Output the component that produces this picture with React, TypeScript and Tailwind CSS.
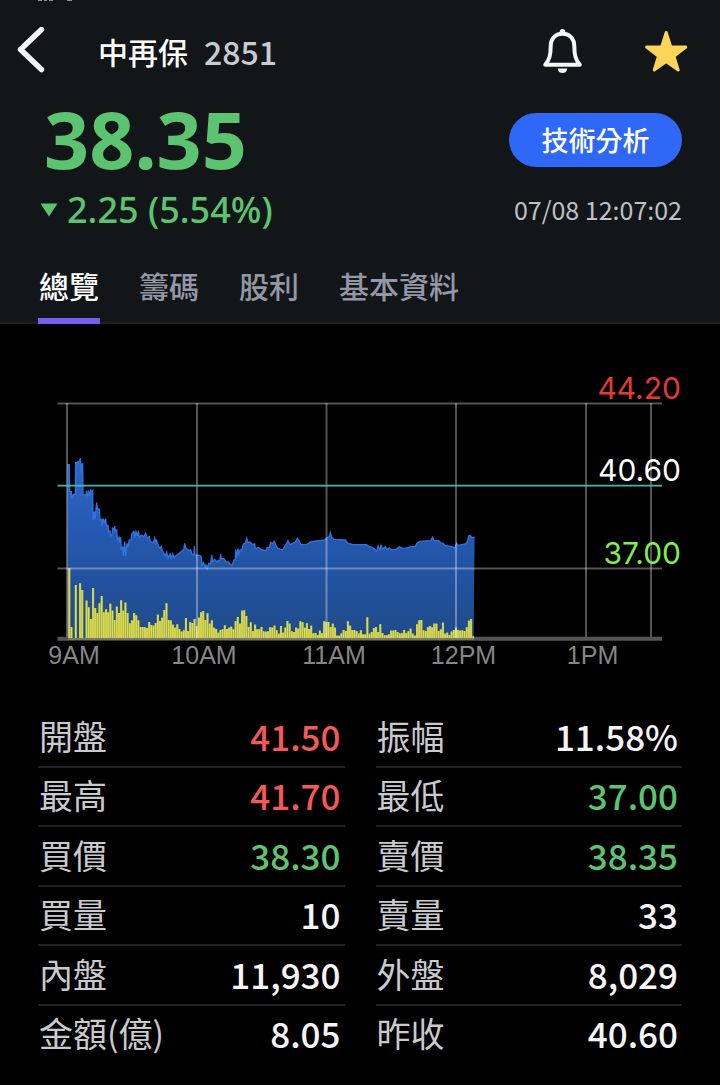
import React from "react";

const CJK = 'font-["Noto_Sans_CJK_TC","Noto_Sans",sans-serif]';

type Tone = "up" | "down" | "flat";
type Quote = { label: string; value: string; tone: Tone };

const quotes: Quote[] = [
  { label: "開盤", value: "41.50", tone: "up" },
  { label: "振幅", value: "11.58%", tone: "flat" },
  { label: "最高", value: "41.70", tone: "up" },
  { label: "最低", value: "37.00", tone: "down" },
  { label: "買價", value: "38.30", tone: "down" },
  { label: "賣價", value: "38.35", tone: "down" },
  { label: "買量", value: "10", tone: "flat" },
  { label: "賣量", value: "33", tone: "flat" },
  { label: "內盤", value: "11,930", tone: "flat" },
  { label: "外盤", value: "8,029", tone: "flat" },
  { label: "金額(億)", value: "8.05", tone: "flat" },
  { label: "昨收", value: "40.60", tone: "flat" },
];

const toneClass: Record<Tone, string> = {
  up: "text-[#f25a5a]",
  down: "text-[#5cc470]",
  flat: "text-[#f5f5f7]",
};

const tabs = ["總覽", "籌碼", "股利", "基本資料"];

// Volume per minute, in thirds of a chart unit.
const volume = [
  213, 36, 0, 162, 0, 167, 147, 0, 115, 95, 60, 153, 93, 78, 107, 129, 80, 89, 80, 106,
  85, 57, 97, 78, 116, 85, 109, 78, 47, 56, 78, 71, 56, 36, 36, 35, 33, 51, 42, 40,
  48, 73, 54, 64, 87, 107, 57, 56, 43, 34, 44, 30, 22, 26, 63, 24, 51, 48, 60, 39,
  64, 80, 84, 57, 77, 46, 56, 34, 30, 19, 27, 29, 41, 30, 34, 37, 29, 54, 66, 46,
  85, 86, 69, 36, 50, 24, 43, 29, 29, 36, 23, 22, 23, 35, 34, 40, 26, 16, 39, 19,
  34, 54, 46, 23, 21, 34, 31, 53, 50, 34, 47, 30, 40, 17, 18, 12, 25, 17, 53, 51,
  51, 36, 46, 34, 10, 10, 17, 27, 24, 53, 40, 27, 27, 24, 17, 26, 14, 14, 65, 16,
  21, 33, 36, 21, 44, 18, 11, 11, 14, 25, 25, 27, 21, 17, 17, 27, 18, 23, 31, 16,
  10, 44, 56, 57, 26, 24, 35, 39, 35, 46, 46, 24, 29, 49, 16, 19, 12, 22, 27, 34,
  27, 25, 26, 24, 35, 55, 60, 8,
];

// Price trace as x,y pairs, in thirds of a chart unit.
const trace =
  "22,44 28,44 29,125 34,125 35,145 40,133 46,133 47,38 52,38 55,34 59,34 61,25 62,40 64,68 65,42 68,42 69,135 78,135 80,122 82,140 86,125 90,138 92,118 94,126 98,122 99,210 103,185 105,208 110,158 112,175 118,178 120,210 125,208 126,228 130,206 134,220 137,206 139,228 144,226 146,245 150,243 152,258 156,255 158,235 162,240 164,228 166,243 170,240 172,268 177,262 178,278 182,262 184,300 188,290 190,318 194,275 197,318 201,280 204,292 208,270 213,270 216,250 222,244 225,262 228,245 233,258 235,242 238,262 244,255 252,260 257,250 262,264 268,260 270,275 280,278 284,264 288,278 290,272 296,290 300,294 304,290 306,300 312,310 316,318 320,306 324,325 330,312 334,326 338,312 342,322 350,315 358,310 366,303 372,296 374,280 378,296 388,302 392,300 396,312 402,315 403,288 405,315 420,316 424,322 426,345 430,338 436,352 438,345 442,356 446,340 452,342 455,315 458,335 464,328 470,335 480,330 482,312 484,326 492,326 498,336 505,336 510,342 517,345 522,330 526,328 527,298 530,322 534,296 536,315 540,300 546,298 550,282 556,280 560,264 564,278 570,276 578,284 584,282 586,295 596,293 606,300 618,302 622,293 628,292 632,278 638,280 643,274 647,284 652,294 662,298 668,300 674,290 680,280 684,272 690,284 698,280 706,276 712,266 718,272 722,284 740,284 752,276 770,273 794,270 800,264 808,260 811,248 815,262 822,268 856,270 864,280 880,284 920,284 928,290 936,292 944,298 950,304 954,288 960,300 963,286 968,298 976,290 980,298 988,294 996,300 1008,298 1018,290 1030,296 1046,292 1052,290 1066,290 1070,280 1080,274 1112,272 1118,262 1122,272 1136,272 1142,278 1150,280 1154,286 1176,290 1184,294 1190,280 1194,286 1216,282 1222,275 1226,258 1231,256 1234,262 1244,262";

const hours = [
  { x: 67, label: "9AM", at: 74 },
  { x: 197, label: "10AM", at: 204 },
  { x: 326.5, label: "11AM", at: 334 },
  { x: 456, label: "12PM", at: 463.5 },
  { x: 586, label: "1PM", at: 592.5 },
];

function Chart() {
  return (
    <svg viewBox="0 324 720 384" className="block w-full" role="img" aria-label="走勢圖">
      <defs>
        <linearGradient id="area" x1="0" y1="0" x2="0" y2="1">
          <stop offset="0" stopColor="#2c68c8" />
          <stop offset="0.45" stopColor="#2457ae" />
          <stop offset="1" stopColor="#1f4b88" />
        </linearGradient>
      </defs>
      <g transform="translate(60 450) scale(0.33333)">
        <polygon points={`22,567 ${trace} 1241,567`} fill="url(#area)" />
        <polyline points={trace} fill="none" stroke="#2f73e2" strokeWidth="4" />
        {volume.map((v, i) => (
          <g key={i}>
            <rect x={24.7 + i * 6.48} y={567 - v} width="6.48" height={v} fill="#b3bf62" />
            <rect x={25.7 + i * 6.48} y={567 - v} width="4" height={v} fill="#e2dd45" />
          </g>
        ))}
      </g>
      <g stroke="#ffffff" strokeOpacity="0.33" strokeWidth="2">
        <path d="M57.500 403.500H662M57.500 568.500H662" />
        {hours.map((h) => (
          <path key={h.label} d={`M${h.x} 403V638`} />
        ))}
        <path d="M651 403V638" />
      </g>
      <path d="M57.500 638.700H68M474 638.700H662" stroke="#555555" strokeWidth="4" />
      <path d="M68 639.200H474" stroke="#77776a" strokeWidth="2.500" />
      <path d="M57.500 485.700H662" stroke="#45b5b3" strokeWidth="1.800" />
      <g className='font-["Liberation_Sans",sans-serif] text-[25px]' fill="#868686" textAnchor="middle">
        {hours.map((h) => (
          <text key={h.label} x={h.at} y="664">
            {h.label}
          </text>
        ))}
      </g>
      <g className='font-[Inter,sans-serif] text-[30px]' textAnchor="end">
        <text x="681" y="398.500" fill="#e33b32">44.20</text>
        <text x="681" y="481" fill="#ffffff">40.60</text>
        <text x="681" y="563.500" fill="#7ff04c">37.00</text>
      </g>
    </svg>
  );
}

export default function App() {
  return (
    <div className={`flex min-h-screen flex-col bg-black text-white ${CJK}`}>
      <header className="border-b-2 border-[#1d2125] bg-[#121619]">
        <svg viewBox="0 0 720 2" className="block h-[2px] w-full" aria-hidden="true">
          <path d="M38 0h4v1h-4zM44 0h3v1h-3zM49 0h4v1h-4zM67 0h5v1h-5z" fill="#8d9093" />
        </svg>
        <div className="flex h-[98px] items-center pr-8 pl-4">
          <button type="button" aria-label="返回" className="flex w-[82px] items-center">
            <svg width="32" height="48" viewBox="16 27 32 48" fill="none" stroke="#f4f4f8" strokeWidth="5.500" strokeLinecap="round" strokeLinejoin="round">
              <path d="M41.500 29.500L20.500 49.500L41.500 69.500" />
            </svg>
          </button>
          <h1 className="flex flex-1 items-center gap-4 text-[30px] leading-[44px] font-medium whitespace-nowrap">
            <span>中再保</span>
            <span className="text-[32px] text-[#c9cbd2]">2851</span>
          </h1>
          <div className="flex items-center gap-[59px]">
            <button type="button" aria-label="提醒">
              <svg width="44" height="48" viewBox="541 27 44 48">
                <circle cx="562.500" cy="31.700" r="2.800" fill="#f5f5f5" />
                <path d="M562.500 33.800C554.500 33.800 550.700 39.500 550.700 46C550.700 55 549.500 59.500 545.200 64.700H579.800C575.500 59.500 574.300 55 574.300 46C574.300 39.500 570.500 33.800 562.500 33.800Z" fill="none" stroke="#f5f5f5" strokeWidth="4" strokeLinejoin="round" />
                <path d="M557.700 68.500H567.300C567 71.500 565 73 562.500 73C560 73 558 71.500 557.700 68.500Z" fill="#f5f5f5" />
              </svg>
            </button>
            <button type="button" aria-label="加入自選">
              <svg width="44" height="48" viewBox="644 27 44 48">
                <path d="M666.200 32.500L670.700 46.700L685.800 47L673.900 56.300L678.200 70L666.200 61.600L654.200 70L658.500 56.300L646.600 47L661.700 46.700Z" fill="#fbd458" stroke="#fbd458" strokeWidth="3" strokeLinejoin="round" />
              </svg>
            </button>
          </div>
        </div>

        <div className="flex items-start justify-between px-[38px]">
          <div className='font-["Noto_Sans",sans-serif] text-[#5cc470]'>
            <p className="pl-[6px] text-[79px] leading-[78px] font-bold">38.35</p>
            <p className="flex items-center gap-[9px] pl-[2px] text-[36px] leading-[64px] font-medium whitespace-nowrap">
              <svg width="18" height="14" viewBox="0 0 18 14" aria-hidden="true">
                <path d="M0.500 0.500H17.500L9 13.500Z" fill="currentColor" />
              </svg>
              2.25 (5.54%)
            </p>
          </div>
          <div className="flex flex-col items-end gap-[25px] pt-[13px]">
            <button type="button" className="h-[54px] w-[173px] rounded-full bg-[#2f68f7] text-[27px] font-medium">
              技術分析
            </button>
            <time className="text-[25px] leading-[34px] text-[#bfc1c6]">07/08 12:07:02</time>
          </div>
        </div>

        <nav className="flex gap-[38px] px-[38px] pt-[21px]" aria-label="個股資訊">
          {tabs.map((tab, i) => (
            <a
              key={tab}
              href="#"
              aria-current={i === 0 ? "page" : undefined}
              className={
                i === 0
                  ? "-mb-[2px] border-b-[6px] border-[#785ef0] px-px pb-[11px] text-[30px] leading-[44px] font-medium text-white"
                  : "px-px text-[30px] leading-[44px] font-medium text-[#9497a5]"
              }
            >
              {tab}
            </a>
          ))}
        </nav>
      </header>

      <main className="flex flex-1 flex-col">
        <Chart />
        <dl className="grid flex-1 auto-rows-fr grid-cols-2 gap-x-[31px] px-[38px] pb-5">
          {quotes.map((q, i) => (
            <div
              key={q.label}
              className={`flex items-center justify-between border-b-2 pr-1 pb-[2px] pl-px leading-[50px] whitespace-nowrap ${
                i < quotes.length - 2 ? "border-[#1e2125]" : "border-transparent"
              }`}
            >
              <dt className="text-[34px] font-normal text-[#c9cacf]">{q.label}</dt>
              <dd className={`text-[35px] font-medium ${toneClass[q.tone]}`}>{q.value}</dd>
            </div>
          ))}
        </dl>
      </main>
    </div>
  );
}
